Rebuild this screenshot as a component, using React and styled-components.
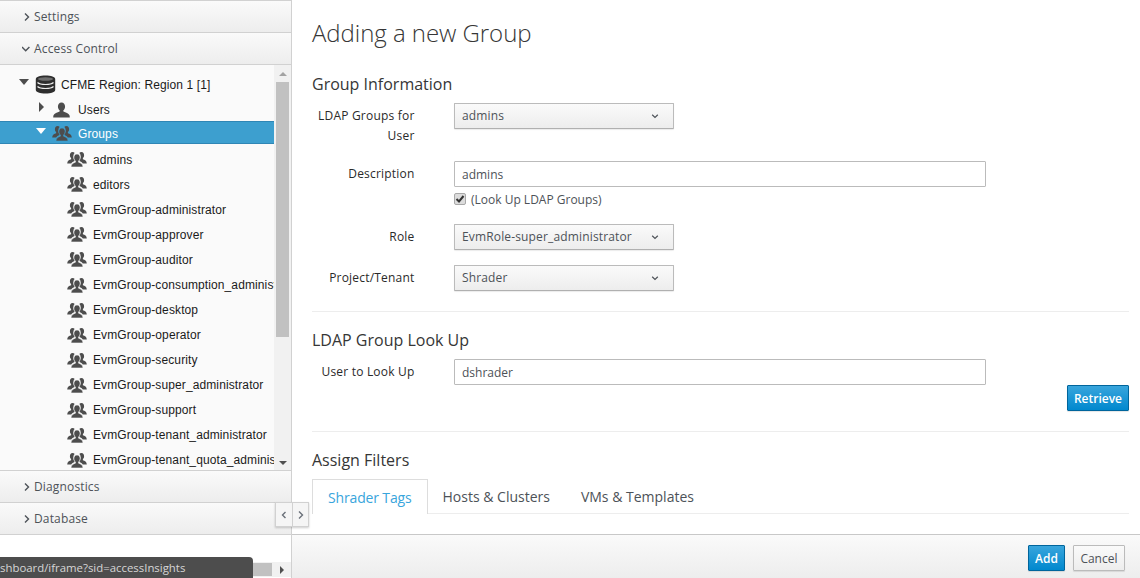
import React from 'react';
import styled, { createGlobalStyle } from 'styled-components';

const GlobalStyle = createGlobalStyle`
  html, body {
    margin: 0;
    padding: 0;
    height: 100%;
    overflow: hidden;
    background: #fff;
  }
  * {
    box-sizing: border-box;
  }
`;

const Page = styled.div`
  position: relative;
  display: flex;
  width: 1140px;
  height: 578px;
  overflow: hidden;
  font-family: 'Open Sans', 'Liberation Sans', sans-serif;
  font-size: 12px;
  color: #363636;
`;

/* left accordion */
const Sidebar = styled.aside`
  display: flex;
  flex-direction: column;
  flex: none;
  width: 292px;
  border-right: 1px solid #d1d1d1;
  background: #fff;
`;
const AccordionHead = styled.div`
  display: flex;
  align-items: center;
  gap: 4px;
  flex: none;
  height: ${(p) => (p.$first ? '33px' : '32px')};
  padding-left: 22px;
  background: linear-gradient(to bottom, #fafafa, #ededed);
  border-bottom: 1px solid #d1d1d1;
  border-top: ${(p) => (p.$first ? '1px solid #d1d1d1' : 'none')};
  color: #4d5258;
  font-size: 12px;
  letter-spacing: 0.15px;
`;
const TreePane = styled.div`
  position: relative;
  display: flex;
  flex: none;
  height: 406px;
  border-bottom: 1px solid #d1d1d1;
  background: #fafafa;
`;
const Tree = styled.div`
  flex: none;
  width: 274px;
  padding-top: 7px;
  overflow: hidden;
  font-family: 'Liberation Sans', Arial, sans-serif;
  letter-spacing: 0.11px;
`;
const TreeRow = styled.div`
  display: flex;
  align-items: center;
  height: 25.07px;
  padding-left: ${(p) => p.$indent}px;
  white-space: nowrap;
  color: #1a1a1a;
`;
const SelectedRow = styled(TreeRow)`
  height: 23px;
  margin: -1px 0 3.07px;
  padding-top: 2px;
  color: #fff;
  background: #3d9fcf;
  border-top: 1px solid #2f86b5;
  border-bottom: 1px solid #2f86b5;
`;
const Caret = styled.span`
  display: block;
  flex: none;
  width: 0;
  height: 0;
  margin-top: -6px;
  ${(p) =>
    p.$open
      ? `border-left: 5px solid transparent;
         border-right: 5px solid transparent;
         border-top: 6px solid ${p.$light ? '#fff' : '#4d4d4d'};`
      : `border-top: 5px solid transparent;
         border-bottom: 5px solid transparent;
         border-left: 5px solid #4d4d4d;
         margin-left: 2px;
         margin-right: 3px;`}
`;
const TreeIcon = styled.svg`
  flex: none;
  display: block;
  margin: 0 ${(p) => p.$after || 5}px 0 ${(p) => p.$gap || 0}px;
`;
const VScroll = styled.div`
  display: flex;
  flex-direction: column;
  align-items: center;
  flex: none;
  width: 17px;
  background: #f1f1f1;
`;
const ScrollThumb = styled.div`
  flex: none;
  width: 13px;
  height: 255px;
  margin-top: 6px;
  background: #c1c1c1;
`;
const ScrollArrow = styled.span`
  display: block;
  width: 0;
  height: 0;
  border-left: 4px solid transparent;
  border-right: 4px solid transparent;
  ${(p) => (p.$down ? 'border-top: 4px solid #505050;' : 'border-bottom: 4px solid #a3a3a3;')}
  margin-top: ${(p) => p.$top}px;
`;

/* lies over the edge between the panels */
const CollapseToggle = styled.div`
  position: absolute;
  left: 275px;
  top: 502px;
  display: flex;
  width: 34px;
  height: 25px;
  background: #f5f5f5;
  border: 1px solid #d1d1d1;
  box-shadow: 0 1px 2px rgba(0, 0, 0, 0.2);
`;
const ToggleHalf = styled.span`
  display: flex;
  align-items: center;
  justify-content: center;
  flex: 1;
  color: #6a7079;
  & + & {
    border-left: 1px solid #d1d1d1;
  }
`;
const HScroll = styled.div`
  position: absolute;
  left: 0;
  top: 562px;
  display: flex;
  align-items: center;
  width: 291px;
  height: 15px;
  background: #f1f1f1;
`;
const HThumb = styled.div`
  width: 272px;
  height: 13px;
  background: #c1c1c1;
`;
const HArrow = styled.span`
  width: 0;
  height: 0;
  margin-left: 8px;
  border-top: 4px solid transparent;
  border-bottom: 4px solid transparent;
  border-left: 4px solid #505050;
`;
const StatusBubble = styled.div`
  position: absolute;
  left: 0;
  top: 557px;
  width: 253px;
  height: 21px;
  padding: 3px 0 0 0;
  overflow: hidden;
  white-space: nowrap;
  background: #4d4d4d;
  border-top-right-radius: 4px;
  color: #d6d6d6;
  font-size: 11.4px;
`;

/* right form */
const Main = styled.main`
  display: flex;
  flex-direction: column;
  flex: 1;
  min-width: 0;
`;
const Content = styled.div`
  flex: none;
  height: 534px;
  padding: 0 11px 0 20px;
  overflow: hidden;
`;
const Title = styled.h1`
  margin: 16px 0 0;
  font-size: 24px;
  line-height: 34px;
  font-weight: 300;
  letter-spacing: -0.05px;
  color: #363636;
`;
const SectionTitle = styled.h3`
  margin: ${(p) => p.$top}px 0 0;
  font-size: 16px;
  line-height: 20px;
  font-weight: 400;
  color: #363636;
`;
const FormRow = styled.div`
  display: flex;
  margin-top: ${(p) => p.$top}px;
`;
const Label = styled.label`
  flex: none;
  width: 102.5px;
  padding-top: 3px;
  text-align: right;
  line-height: 20px;
  font-weight: 400;
  letter-spacing: 0.2px;
  color: #2a2a2a;
`;
const Field = styled.div`
  margin-left: 39.5px;
`;
const Select = styled.div`
  display: flex;
  align-items: center;
  justify-content: space-between;
  width: 220px;
  height: 26px;
  padding: 0 14px 1px 7px;
  background: linear-gradient(to bottom, #fafafa, #ededed);
  border: 1px solid #bbb;
  border-bottom-color: #b0b0b0;
  border-radius: 1px;
  box-shadow: 0 1px 1px rgba(3, 3, 3, 0.08);
  color: #4d5258;
  letter-spacing: 0.15px;
`;
const TextInput = styled.div`
  display: flex;
  align-items: center;
  width: 532px;
  height: 26px;
  padding: 0 7px;
  background: #fff;
  border: 1px solid #bbb;
  border-radius: 1px;
  color: #4d5258;
`;
const CheckRow = styled.div`
  display: flex;
  align-items: center;
  gap: 5px;
  height: 14px;
  margin-top: 5px;
  color: #4d5258;
`;
const CheckBox = styled.span`
  display: flex;
  align-items: center;
  justify-content: center;
  width: 12px;
  height: 12px;
  background: #dcdcdc;
  border: 1px solid #a8a8a8;
  border-radius: 2px;
`;
const Rule = styled.hr`
  height: 1px;
  margin: ${(p) => p.$top}px 0 0;
  border: 0;
  background: #ededed;
`;
const ButtonRow = styled.div`
  display: flex;
  justify-content: flex-end;
`;
const PrimaryButton = styled.button`
  height: 26px;
  padding: 0 6px;
  background: linear-gradient(to bottom, #39a5dc, #0088ce);
  border: 1px solid #00659c;
  border-radius: 1px;
  box-shadow: 0 1px 1px rgba(3, 3, 3, 0.1);
  color: #fff;
  font-family: inherit;
  font-size: 12px;
  font-weight: 600;
`;
const DefaultButton = styled.button`
  height: 26px;
  padding: 0 6.5px;
  background: linear-gradient(to bottom, #fafafa, #ededed);
  border: 1px solid #bbb;
  border-radius: 1px;
  box-shadow: 0 1px 1px rgba(3, 3, 3, 0.1);
  color: #4d5258;
  font-family: inherit;
  font-size: 12px;
  font-weight: 400;
`;
const Tabs = styled.div`
  display: flex;
  height: 35px;
  margin-top: 9px;
  border-bottom: 1px solid #ededed;
`;
const Tab = styled.div`
  display: flex;
  align-items: center;
  height: ${(p) => (p.$active ? '35px' : '34px')};
  padding: 0 ${(p) => (p.$active ? '15px' : '16px')} 0 15px;
  background: #fff;
  border: ${(p) => (p.$active ? '1px solid #ddd' : '0')};
  border-bottom: 0;
  color: ${(p) => (p.$active ? '#39a5dc' : '#4d5258')};
  font-size: 14px;
  letter-spacing: ${(p) => (p.$active ? '-0.15px' : '0')};
`;
const Footer = styled.div`
  display: flex;
  align-items: flex-start;
  justify-content: flex-end;
  gap: 8px;
  flex: 1;
  padding: 10px 15px 0 0;
  background: linear-gradient(to bottom, #fafafa, #ededed);
  border-top: 1px solid #c8c8c8;
`;

const groups = [
  'admins',
  'editors',
  'EvmGroup-administrator',
  'EvmGroup-approver',
  'EvmGroup-auditor',
  'EvmGroup-consumption_administrator',
  'EvmGroup-desktop',
  'EvmGroup-operator',
  'EvmGroup-security',
  'EvmGroup-super_administrator',
  'EvmGroup-support',
  'EvmGroup-tenant_administrator',
  'EvmGroup-tenant_quota_administrator',
];

const chevronPaths = {
  right: 'M3 1.5 L6.5 5 L3 8.5',
  left: 'M5.5 2 L2.5 5 L5.5 8',
  down: 'M0 3 L3.7 6.7 L7.4 3',
  small: 'M1.2 3.8 L4 6.4 L6.8 3.8',
};

const Chevron = ({ dir, color = '#4d5258', weight = 1.4 }) => (
  <svg width="8" height="10" viewBox="0 0 8 10" fill="none" stroke={color} strokeWidth={weight}>
    <path d={chevronPaths[dir]} />
  </svg>
);

const DatabaseIcon = () => (
  <TreeIcon width="21" height="19" viewBox="0 0 21 19" $gap="6">
    <path
      fill="#2e2e2e"
      d="M10.5 .5C5 .5 .8 1.8 .8 4v11c0 2.2 4.2 3.5 9.7 3.5s9.7-1.3 9.7-3.5V4c0-2.2-4.2-3.5-9.7-3.5z"
    />
    <ellipse cx="10.5" cy="4" rx="7.5" ry="1.8" fill="#6e6e6e" />
    <path
      fill="none"
      stroke="#ececec"
      strokeWidth="1.2"
      d="M2.5 7.5c1.5 1.4 4.5 2 8 2s6.5-.6 8-2M2.5 11.5c1.5 1.4 4.5 2 8 2s6.5-.6 8-2"
    />
  </TreeIcon>
);

const UserIcon = () => (
  <TreeIcon width="17" height="16" viewBox="0 0 18 17" $gap="6" $after="8">
    <path
      fill="#4d4d4d"
      d="M9 .5C6.6 .5 5.2 2.3 5.2 4.7c0 1.8.8 3.3 1.8 4.1v1.3c-2.5.8-5.6 2-6.5 4.1-.3.8-.3 1.8-.3 2.3h17.6c0-.5 0-1.500-.3-2.300-.9-2.100-4-3.300-6.500-4.100V8.800c1-.8 1.800-2.300 1.800-4.100C12.800 2.300 11.400 .5 9 .5z"
    />
  </TreeIcon>
);

const GroupIcon = ({ gap = 0, ground = '#fafafa' }) => (
  <TreeIcon width="20" height="17" viewBox="0 0 20 17" $gap={gap} $after="6">
    <path
      fill="#4d4d4d"
      d="M5.5 1C3.8 1 2.9 2.4 2.9 4.2c0 1.2.5 2.3 1.2 2.9v1.1C2.3 8.8.2 9.7.2 12.5H4.2c.6-1.2 2-2 3.4-2.6V9C6.700 8 6.200 6.700 6.400 5 6.500 3.600 7 2.400 7.700 2 7.200 1.400 6.500 1 5.500 1zM14.500 1c-1 0-1.700.4-2.200 1 .7.4 1.200 1.600 1.300 3 .2 1.700-.3 3-1.200 4v.9c1.400.6 2.800 1.400 3.400 2.600h4c0-2.800-2.100-3.700-3.900-4.300V7.100c.7-.6 1.200-1.700 1.200-2.900C17.100 2.400 16.200 1 14.500 1z"
    />
    <path
      fill="#4d4d4d"
      stroke={ground}
      strokeWidth="0.6"
      d="M10 3C7.900 3 6.900 4.600 6.900 6.600c0 1.500.6 2.700 1.500 3.400v1.200c-2 .7-4.400 1.700-4.400 4.800h12c0-3.100-2.400-4.100-4.400-4.800V10c.9-.7 1.500-1.900 1.500-3.400C13.100 4.600 12.100 3 10 3z"
    />
  </TreeIcon>
);

const App = () => (
  <Page>
    <GlobalStyle />
    <Sidebar>
      <AccordionHead $first>
        <Chevron dir="right" />
        Settings
      </AccordionHead>
      <AccordionHead>
        <Chevron dir="down" />
        Access Control
      </AccordionHead>
      <TreePane>
        <Tree>
          <TreeRow $indent={19}>
            <Caret $open />
            <DatabaseIcon />
            CFME Region: Region 1 [1]
          </TreeRow>
          <TreeRow $indent={37}>
            <Caret />
            <UserIcon />
            Users
          </TreeRow>
          <SelectedRow $indent={36}>
            <Caret $open $light />
            <GroupIcon gap={6} ground="#3d9fcf" />
            Groups
          </SelectedRow>
          {groups.map((name) => (
            <TreeRow key={name} $indent={67}>
              <GroupIcon />
              {name}
            </TreeRow>
          ))}
        </Tree>
        <VScroll>
          <ScrollArrow $top={7} />
          <ScrollThumb />
          <ScrollArrow $down $top={124} />
        </VScroll>
      </TreePane>
      <AccordionHead>
        <Chevron dir="right" />
        Diagnostics
      </AccordionHead>
      <AccordionHead>
        <Chevron dir="right" />
        Database
      </AccordionHead>
    </Sidebar>

    <Main>
      <Content>
        <Title>Adding a new Group</Title>
        <SectionTitle $top={24}>Group Information</SectionTitle>
        <FormRow $top={9}>
          <Label>LDAP Groups for User</Label>
          <Field>
            <Select>
              admins
              <Chevron dir="small" weight={1.2} />
            </Select>
          </Field>
        </FormRow>
        <FormRow $top={15}>
          <Label>Description</Label>
          <Field>
            <TextInput>admins</TextInput>
            <CheckRow>
              <CheckBox>
                <svg width="10" height="10" viewBox="0 0 10 10">
                  <path d="M1.5 5 L4 7.5 L8.5 2" fill="none" stroke="#333" strokeWidth="2" />
                </svg>
              </CheckBox>
              (Look Up LDAP Groups)
            </CheckRow>
          </Field>
        </FormRow>
        <FormRow $top={18}>
          <Label>Role</Label>
          <Field>
            <Select>
              EvmRole-super_administrator
              <Chevron dir="small" weight={1.2} />
            </Select>
          </Field>
        </FormRow>
        <FormRow $top={15}>
          <Label>Project/Tenant</Label>
          <Field>
            <Select>
              Shrader
              <Chevron dir="small" weight={1.2} />
            </Select>
          </Field>
        </FormRow>
        <Rule $top={20} />
        <SectionTitle $top={18}>LDAP Group Look Up</SectionTitle>
        <FormRow $top={9}>
          <Label>User to Look Up</Label>
          <Field>
            <TextInput>dshrader</TextInput>
          </Field>
        </FormRow>
        <ButtonRow>
          <PrimaryButton>Retrieve</PrimaryButton>
        </ButtonRow>
        <Rule $top={20} />
        <SectionTitle $top={18}>Assign Filters</SectionTitle>
        <Tabs>
          <Tab $active>Shrader Tags</Tab>
          <Tab>Hosts &amp; Clusters</Tab>
          <Tab>VMs &amp; Templates</Tab>
        </Tabs>
      </Content>
      <Footer>
        <PrimaryButton>Add</PrimaryButton>
        <DefaultButton>Cancel</DefaultButton>
      </Footer>
    </Main>

    <CollapseToggle>
      <ToggleHalf>
        <Chevron dir="left" color="#6a7079" />
      </ToggleHalf>
      <ToggleHalf>
        <Chevron dir="right" color="#6a7079" />
      </ToggleHalf>
    </CollapseToggle>
    <HScroll>
      <HThumb />
      <HArrow />
    </HScroll>
    <StatusBubble>shboard/iframe?sid=accessInsights</StatusBubble>
  </Page>
);

export default App;
